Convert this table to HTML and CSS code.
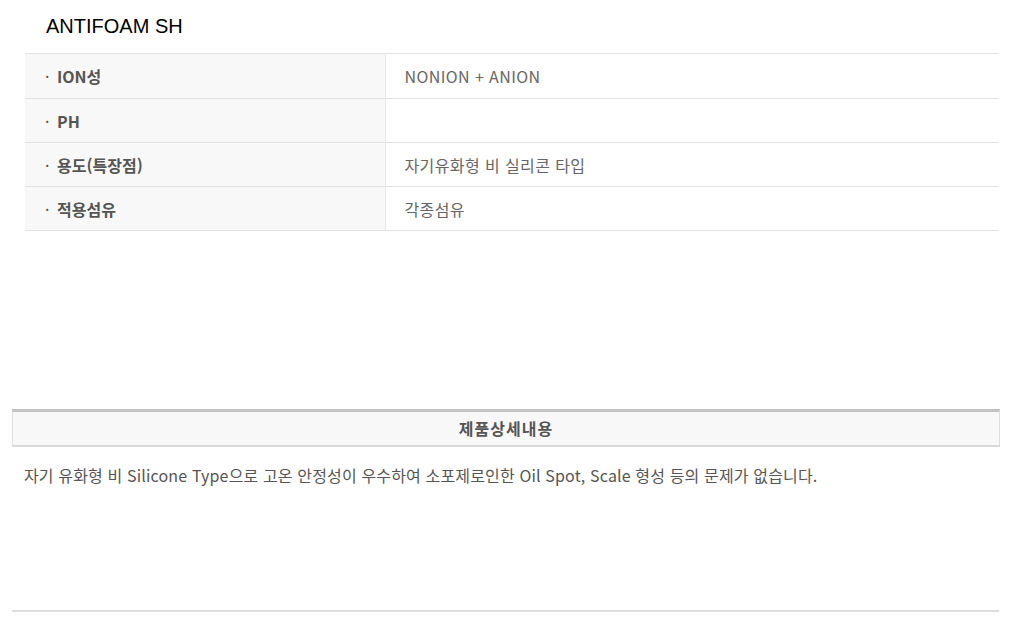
FILE: index.html
```html
<!DOCTYPE html>
<html lang="ko">
<head>
<meta charset="utf-8">
<title>ANTIFOAM SH</title>
<link rel="stylesheet" href="styles.css">
</head>
<body>
<div class="page">
  <h1 class="title">ANTIFOAM SH</h1>
  <table class="spec">
    <tr class="first"><th><span class="dot">·</span>ION성</th><td>NONION + ANION</td></tr>
    <tr><th><span class="dot">·</span>PH</th><td></td></tr>
    <tr><th><span class="dot">·</span>용도(특장점)</th><td>자기유화형 비 실리콘 타입</td></tr>
    <tr><th><span class="dot">·</span>적용섬유</th><td>각종섬유</td></tr>
  </table>
  <div class="detail">
    <div class="detail-head">제품상세내용</div>
    <p class="detail-body">자기 유화형 비 Silicone Type으로 고온 안정성이 우수하여 소포제로인한 Oil Spot, Scale 형성 등의 문제가 없습니다.</p>
  </div>
  <div class="bottom-line"></div>
</div>
</body>
</html>
```

FILE: styles.css
```css
html, body {
  margin: 0;
  padding: 0;
  background: #fff;
}
.page {
  width: 1010px;
  font-family: "Noto Sans CJK KR", "Noto Sans", sans-serif;
}
.title {
  margin: 0;
  padding: 15px 0 0 46px;
  height: 53px;
  box-sizing: border-box;
  font-family: "Liberation Sans", Arial, sans-serif;
  font-weight: normal;
  font-size: 20px;
  line-height: 23px;
  color: #000;
}
.spec {
  margin-left: 25px;
  width: 974px;
  border-collapse: collapse;
  border-top: 1px solid #e2e2e2;
}
.spec tr {
  border-bottom: 1px solid #e2e2e2;
}
.spec th {
  width: 360px;
  height: 44px;
  padding: 0 0 0 20px;
  box-sizing: border-box;
  background: #f8f8f8;
  border-right: 1px solid #e8e8e8;
  text-align: left;
  font-weight: bold;
  font-size: 16px;
  color: #555;
  vertical-align: middle;
}
.spec .first th {
  height: 45px;
}
.dot {
  display: inline-block;
  width: 12px;
  font-weight: normal;
}
.spec td {
  padding: 0 0 0 19px;
  font-size: 16px;
  letter-spacing: 0.4px;
  color: #666;
  vertical-align: middle;
}
.detail {
  margin: 178px 0 0 12px;
  width: 988px;
}
.detail-head {
  height: 38px;
  box-sizing: border-box;
  border-top: 3px solid #c2c2c2;
  border-left: 1px solid #ddd;
  border-right: 1px solid #ddd;
  border-bottom: 2px solid #d8d8d8;
  background: #f8f8f8;
  text-align: center;
  font-weight: bold;
  font-size: 16px;
  letter-spacing: 1px;
  line-height: 33px;
  color: #555;
}
.detail-body {
  margin: 0;
  padding: 16px 0 0 12px;
  height: 163px;
  box-sizing: border-box;
  font-size: 16px;
  letter-spacing: 0.15px;
  line-height: 24px;
  color: #555;
}
.bottom-line {
  margin-left: 12px;
  width: 987px;
  height: 2px;
  background: #ddd;
}
```
